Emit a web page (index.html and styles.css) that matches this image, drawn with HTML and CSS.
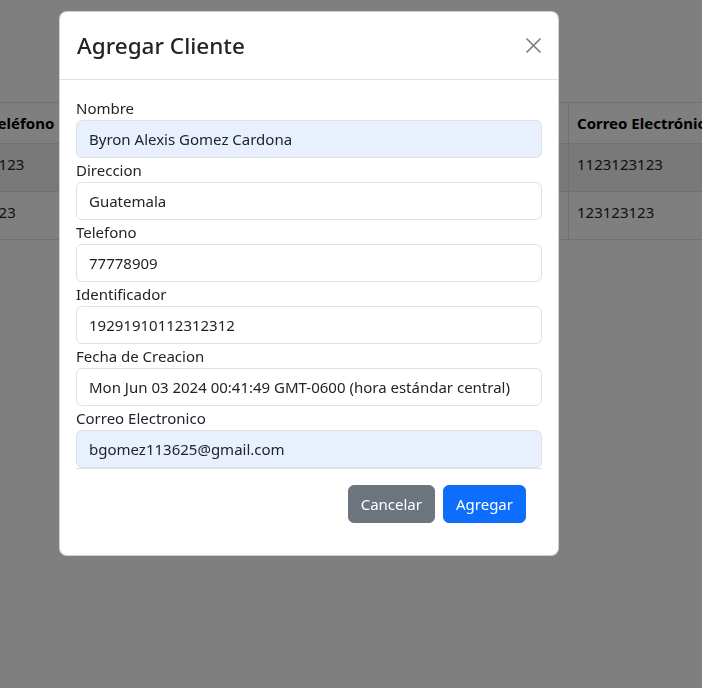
FILE: index.html
```html
<!DOCTYPE html>
<html lang="es">
<head>
<meta charset="utf-8">
<title>Agregar Cliente</title>
<link rel="stylesheet" href="styles.css">
</head>
<body>
<div class="page">
  <table class="table">
    <thead>
      <tr><th class="c-tel">Teléfono</th><th class="c-id">Identificador</th><th class="c-mail">Correo Electrónico</th></tr>
    </thead>
    <tbody>
      <tr class="odd"><td>1123</td><td>1929191011</td><td>1123123123</td></tr>
      <tr><td>123</td><td>1231231</td><td>123123123</td></tr>
    </tbody>
  </table>
</div>
<div class="backdrop"></div>
<div class="modal">
  <div class="modal-header">
    <h4 class="modal-title">Agregar Cliente</h4>
    <button class="btn-close" aria-label="Cerrar">
      <svg width="17" height="17" viewBox="0 0 17 17"><path d="M1.5 1.5 L15.5 15.5 M15.5 1.5 L1.5 15.5" stroke="#7a7a7a" stroke-width="1.6" fill="none"/></svg>
    </button>
  </div>
  <div class="modal-body">
    <div class="field"><label>Nombre</label><div class="input filled">Byron Alexis Gomez Cardona</div></div>
    <div class="field"><label>Direccion</label><div class="input">Guatemala</div></div>
    <div class="field"><label>Telefono</label><div class="input">77778909</div></div>
    <div class="field"><label>Identificador</label><div class="input">19291910112312312</div></div>
    <div class="field"><label>Fecha de Creacion</label><div class="input">Mon Jun 03 2024 00:41:49 GMT-0600 (hora estándar central)</div></div>
    <div class="field"><label>Correo Electronico</label><div class="input filled">bgomez113625@gmail.com</div></div>
    <div class="divider"></div>
    <div class="actions">
      <button class="btn btn-secondary">Cancelar</button>
      <button class="btn btn-primary">Agregar</button>
    </div>
  </div>
</div>
</body>
</html>
```
FILE: styles.css
```css
html, body {
  margin: 0;
  padding: 0;
  height: 100%;
  overflow: hidden;
  background: #ffffff;
  font-family: "Noto Sans", "Open Sans", sans-serif;
  font-size: 15px;
  color: #212529;
}
.page {
  padding-top: 102px;
}
.table {
  border-collapse: collapse;
  margin-left: -18px;
  width: 744px;
  table-layout: fixed;
}
.table th, .table td {
  border-top: 1px solid #dee2e6;
  border-bottom: 1px solid #dee2e6;
  border-right: 1px solid #dee2e6;
  padding: 8px;
  text-align: left;
  line-height: 24px;
  white-space: nowrap;
  overflow: hidden;
}
.table th {
  font-weight: 700;
  color: #000;
  height: 24px;
}
.table td {
  height: 31px;
  padding-top: 4px;
  padding-bottom: 12px;
}
.table .c-tel { width: 284px; }
.table .c-id { width: 269px; }
.table .c-mail { width: 175px; }
.table tr.odd td {
  background: rgba(0, 0, 0, 0.05);
}
.backdrop {
  position: fixed;
  inset: 0;
  background: rgba(0, 0, 0, 0.5);
}
.modal {
  position: absolute;
  left: 59px;
  top: 11px;
  width: 498px;
  background: #fff;
  border: 1px solid rgba(0, 0, 0, 0.175);
  border-radius: 8px;
}
.modal-header {
  display: flex;
  align-items: center;
  justify-content: space-between;
  padding: 16px;
  border-bottom: 1px solid #dee2e6;
}
.modal-title {
  margin: 0 0 0 1px;
  font-size: 22.5px;
  font-weight: 500;
  line-height: 35px;
  color: #212529;
}
.btn-close {
  border: 0;
  background: transparent;
  padding: 0;
  width: 17px;
  height: 17px;
  display: flex;
}
.modal-body {
  padding: 16px 16px 32px;
}
.field label {
  display: block;
  line-height: 24px;
  height: 24px;
  color: #212529;
}
.input {
  box-sizing: border-box;
  height: 38px;
  padding: 6px 12px;
  border: 1px solid #dee2e6;
  border-radius: 6px;
  line-height: 24px;
  color: #212529;
  background: #fff;
  white-space: nowrap;
  overflow: hidden;
}
.input.filled {
  background: #e8f0fe;
}
.divider {
  height: 1px;
  background: #dee2e6;
}
.actions {
  display: flex;
  justify-content: flex-end;
  gap: 8px;
  padding: 16px 16px 0 0;
}
.btn {
  font-family: inherit;
  font-size: 15px;
  line-height: 24px;
  padding: 6px 12px;
  height: 38px;
  border: 1px solid transparent;
  border-radius: 6px;
  color: #fff;
}
.btn-secondary { background: #6c757d; border-color: #6c757d; }
.btn-primary { background: #0d6efd; border-color: #0d6efd; }
```
